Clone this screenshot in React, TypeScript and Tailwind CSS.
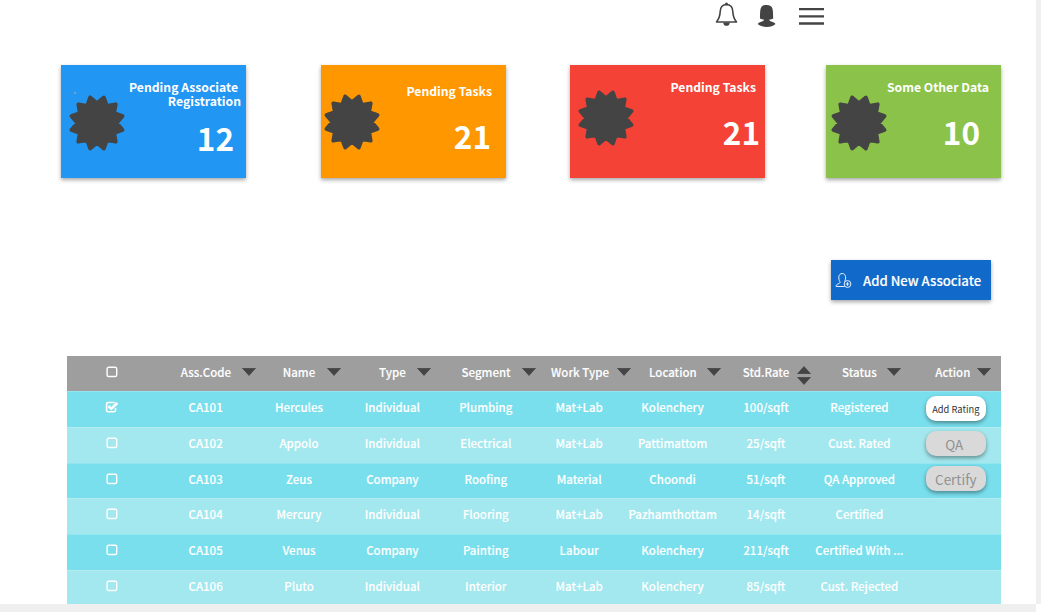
import React from "react";

const starPoints = Array.from({ length: 24 }, (_, i) => {
  const radius = i % 2 === 0 ? 19.8 : 26.5;
  const angle = ((i * 15 - 90) * Math.PI) / 180;
  return `${28 + radius * Math.cos(angle)},${28 + radius * Math.sin(angle)}`;
}).join(" ");

function Star({ className }: { className: string }) {
  return (
    <svg className={`h-14 w-14 shrink-0 ${className}`} viewBox="0 0 56 56" overflow="visible">
      <polygon points={starPoints} fill="#444" stroke="#444" strokeWidth="3.8" strokeLinejoin="round" />
    </svg>
  );
}

type CardProps = {
  lines: { text: string; className: string }[];
  value: string;
  box: string;
  star: string;
  top: string;
  valueClass: string;
  dot?: boolean;
};

function Card({ lines, value, box, star, top, valueClass, dot }: CardProps) {
  return (
    <div className={`relative flex h-[113px] shrink-0 text-white shadow-[0_2px_4px_rgba(0,0,0,0.35)] ${box}`}>
      {dot && <span className="absolute top-[27px] left-[13px] size-[2px] bg-[#7f9fba]" />}
      <Star className={star} />
      <div className={`flex min-w-0 flex-1 flex-col items-end whitespace-nowrap ${top}`}>
        {lines.map((l) => (
          <span key={l.text} className={`text-[12.2px] leading-[14px] font-bold ${l.className}`}>
            {l.text}
          </span>
        ))}
        <span className={`text-[31.5px] leading-[36px] font-bold ${valueClass}`}>{value}</span>
      </div>
    </div>
  );
}

function Arrow({ up, className = "" }: { up?: boolean; className?: string }) {
  return (
    <svg className={`h-2 w-[14px] ${className}`} viewBox="0 0 14 8">
      <path d={up ? "M0.5 7.8 7 0.6l6.5 7.2z" : "M0.5 0.2h13L7 7.4z"} fill="#444" stroke="#444" strokeWidth=".8" strokeLinejoin="round" />
    </svg>
  );
}

function Check({ checked }: { checked?: boolean }) {
  return (
    <svg className="h-3 w-[14px]" viewBox="0 0 14 12" fill="none" stroke="#fff" strokeWidth="1.4">
      {checked ? (
        <>
          <path d="M10.5 7v2.200a1.600 1.600 0 0 1-1.600 1.600H3.200a1.600 1.600 0 0 1-1.600-1.600V3.100a1.600 1.600 0 0 1 1.600-1.600h6.600" strokeWidth="1.600" />
          <path d="M3.500 5 6.300 7.800 12.300 2" strokeWidth="2.600" />
        </>
      ) : (
        <rect x="2.100" y="1.200" width="9.600" height="9.300" rx="1.600" />
      )}
    </svg>
  );
}

const headers = [
  { text: "Ass.Code", label: "pr-[5px]", arrow: "ml-[82px]" },
  { text: "Name", label: "pr-[3px]", arrow: "ml-[73px]" },
  { text: "Type", label: "pr-[3px]", arrow: "ml-[70px]" },
  { text: "Segment", label: "pr-[4px]", arrow: "ml-[81px]" },
  { text: "Work Type", label: "pr-[5px]", arrow: "ml-[83px]" },
  { text: "Location", label: "pr-[3px]", arrow: "ml-[80px]" },
  { text: "Std.Rate", label: "pr-[3px]", arrow: "ml-[76px]" },
  { text: "Status", label: "pr-[3px]", arrow: "ml-[73px]" },
  { text: "Action", label: "pr-[3px]", arrow: "ml-[69px]" },
];

const rows = [
  ["CA101", "Hercules", "Individual", "Plumbing", "Mat+Lab", "Kolenchery", "100/sqft", "Registered"],
  ["CA102", "Appolo", "Individual", "Electrical", "Mat+Lab", "Pattimattom", "25/sqft", "Cust. Rated"],
  ["CA103", "Zeus", "Company", "Roofing", "Material", "Choondi", "51/sqft", "QA Approved"],
  ["CA104", "Mercury", "Individual", "Flooring", "Mat+Lab", "Pazhamthottam", "14/sqft", "Certified"],
  ["CA105", "Venus", "Company", "Painting", "Labour", "Kolenchery", "211/sqft", "Certified With ..."],
  ["CA106", "Pluto", "Individual", "Interior", "Mat+Lab", "Kolenchery", "85/sqft", "Cust. Rejected"],
];

const rowStyles = [
  "h-9 bg-[#79dfed]",
  "h-9 bg-[#a2e8ee]",
  "h-[35px] bg-[#79dfed]",
  "h-9 bg-[#a2e8ee]",
  "h-9 bg-[#79dfed]",
  "h-[34px] bg-[#a2e8ee]",
];

const actions = [
  { text: "Add Rating", className: "mt-1 bg-white pt-px text-[9.3px] text-[#333]" },
  { text: "QA", className: "mt-[3px] bg-[#d9d9d9] pr-[3px] text-[13.5px] text-[#919191]" },
  { text: "Certify", className: "mt-[2px] bg-[#d9d9d9] text-[13.5px] text-[#919191]" },
];

function TopIcons() {
  return (
    <header className="flex h-[65px] items-start pl-[715px]">
      <svg className="mt-0.5 h-[25px] w-[23px]" viewBox="0 0 23 25" fill="none" stroke="#444" strokeWidth="1.6">
        <path d="M11.5 2.500C7.500 2.500 5.400 5.700 5.200 9.500 5 14 4.500 16.400 1.500 20h20c-3-3.600-3.500-6-3.700-10.500C17.600 5.700 15.500 2.500 11.500 2.500Z" strokeLinejoin="round" />
        <circle cx="11.5" cy="1.900" r="1.500" fill="#444" stroke="none" />
        <path d="M8.300 20.400a3.200 3.400 0 0 0 6.400 0Z" fill="#444" stroke="none" />
      </svg>
      <svg className="mt-1 ml-[19px] h-6 w-[19px]" viewBox="0 0 19 24" fill="#444">
        <path d="M3 14.500C3.200 6 2.600 1 9.600 1s6.400 5 6.600 13.500c-1.400.9-2.600 1-3.800 1 0 1.300.4 1.700 2.600 2.300 2 .5 2.800 1.200 3.500 2.200C16.500 21.800 13.500 23 9.700 23S3 21.800.7 20c.7-1 1.500-1.700 3.500-2.200 2.400-.6 2.600-1 2.600-2.300-1.200 0-2.400-.1-3.800-1Z" />
      </svg>
      <svg className="mt-2 ml-[23px] h-[17px] w-[25px]" viewBox="0 0 25 17" stroke="#444" strokeWidth="2.3">
        <path d="M0 1.200h25M0 8.400h25M0 15.500h25" />
      </svg>
    </header>
  );
}

export default function App() {
  return (
    <div className="flex h-[612px] w-[1041px] flex-col overflow-hidden bg-white font-['Noto_Sans_CJK_SC','Open_Sans',sans-serif]">
      <div className="flex h-[604px]">
        <main className="h-[604px] w-[1036px] overflow-hidden">
          <TopIcons />
          <section className="flex pl-[61px]">
            <Card
              lines={[
                { text: "Pending Associate", className: "mr-[8px]" },
                { text: "Registration", className: "mr-[5px]" },
              ]}
              value="12"
              box="w-[185px] bg-[#2196f3]"
              star="ml-2 mt-[30px]"
              top="pt-[15px]"
              valueClass="mt-[11px] mr-[12px]"
              dot
            />
            <Card
              lines={[{ text: "Pending Tasks", className: "mr-[14px]" }]}
              value="21"
              box="ml-[75px] w-[185px] bg-[#ff9800]"
              star="ml-[3px] mt-[29px]"
              top="pt-[19px]"
              valueClass="mt-[19px] mr-[15px]"
            />
            <Card
              lines={[{ text: "Pending Tasks", className: "mr-[9px]" }]}
              value="21"
              box="ml-16 w-[195px] bg-[#f44336]"
              star="ml-2 mt-[25px]"
              top="pt-[15px]"
              valueClass="mt-[19px] mr-[5px]"
            />
            <Card
              lines={[{ text: "Some Other Data", className: "mr-[12px]" }]}
              value="10"
              box="ml-[61px] w-[175px] bg-[#8bc34a]"
              star="ml-[5px] mt-[30px]"
              top="pt-[15px]"
              valueClass="mt-[19px] mr-[21px]"
            />
          </section>
          <button className="mt-[82px] ml-[831px] flex h-10 w-[160px] items-center bg-[#116aca] text-white shadow-[0_2px_4px_rgba(0,0,0,0.35)]">
            <svg className="ml-[4px] h-[17px] w-[17px] shrink-0" viewBox="0 0 16 17" fill="none" stroke="#fff" strokeWidth=".9">
              <path d="M9 14.500H.6c0-2 1.200-2.300 2.700-2.900 1.200-.5 1.500-1 1-2.200C2.800 7.300 2.500 1.500 6.700 1.500s3.900 5.800 2.400 7.900" />
              <circle cx="12" cy="12" r="3.400" />
              <path d="M12 10.200v3.600M10.200 12h3.600" />
            </svg>
            <span className="ml-[11px] pt-[2px] text-[13.15px] leading-5 font-medium whitespace-nowrap [-webkit-text-stroke:0.12px_#fff]">Add New Associate</span>
          </button>
          <section className="mt-14 ml-[67px] w-[934px] text-[11.5px] font-medium text-white">
            <div className="grid h-[35px] grid-cols-10 bg-[#9e9e9e] leading-[32px]">
              <div className="flex h-8 items-center justify-center pr-1">
                <Check />
              </div>
              {headers.map((h) => (
                <div key={h.text} className="grid h-[35px] w-full overflow-visible whitespace-nowrap">
                  <span className={`col-start-1 row-start-1 text-center [-webkit-text-stroke:0.12px_#fff] ${h.label}`}>
                    {h.text}
                  </span>
                  {h.text === "Std.Rate" ? (
                    <span className={`col-start-1 row-start-1 mt-[10px] flex flex-col gap-[3px] ${h.arrow}`}>
                      <Arrow up />
                      <Arrow />
                    </span>
                  ) : (
                    <Arrow className={`col-start-1 row-start-1 mt-[12px] ${h.arrow}`} />
                  )}
                </div>
              ))}
            </div>
            {rows.map((row, i) => (
              <div key={row[0]} className={`grid grid-cols-10 border-t border-white/20 leading-[31px] whitespace-nowrap ${rowStyles[i]}`}>
                <div className="flex h-[30px] items-center justify-center pr-1">
                  <Check checked={i === 0} />
                </div>
                {row.map((cell, c) => (
                  <div key={c} className="pr-[3px] text-center [-webkit-text-stroke:0.12px_#fff]">
                    {cell}
                  </div>
                ))}
                <div className="flex items-start justify-center pl-[3px]">
                  {actions[i] && (
                    <button
                      className={`flex h-[25px] w-[60px] items-center justify-center rounded-[10px] leading-5 font-normal shadow-[0_2px_4px_rgba(0,0,0,0.4)] ${actions[i].className}`}
                    >
                      {actions[i].text}
                    </button>
                  )}
                </div>
              </div>
            ))}
          </section>
        </main>
        <div className="w-[5px] bg-[#f0f0f0]" />
      </div>
      <div className="h-2 w-[1036px] bg-[#efefef]" />
    </div>
  );
}
